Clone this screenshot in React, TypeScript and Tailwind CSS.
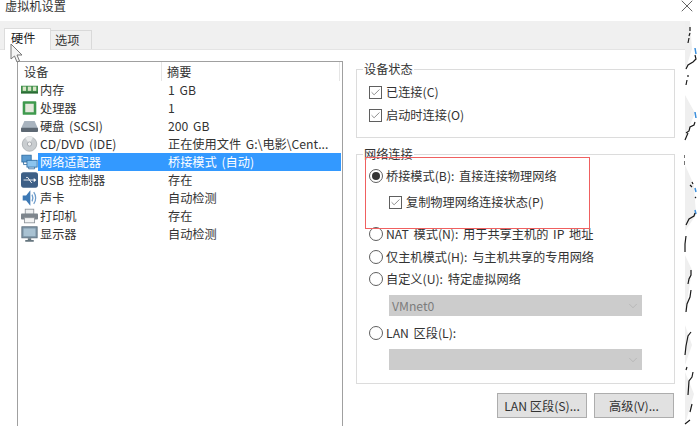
import type { ReactNode } from "react";
import { Check, ChevronDown, X } from "lucide-react";

const RamIcon = () => (
  <svg width="17" height="16" viewBox="0 0 20 18">
    <rect x="0" y="4" width="20" height="9" fill="#3f8f4a" />
    <rect x="0" y="11" width="20" height="2" fill="#2c6a36" />
    <rect x="2" y="5" width="4" height="5" fill="#d9e6c8" />
    <rect x="8" y="5" width="4" height="5" fill="#d9e6c8" />
    <rect x="14" y="5" width="4" height="5" fill="#d9e6c8" />
  </svg>
);

const CpuIcon = () => (
  <svg width="17" height="16" viewBox="0 0 20 18">
    <rect x="2" y="1" width="16" height="16" rx="1" fill="#3f9a4e" />
    <rect x="5" y="4" width="10" height="10" fill="#e4e8dc" />
  </svg>
);

const DiskIcon = () => (
  <svg width="17" height="16" viewBox="0 0 20 18">
    <path d="M4 3h12l4 9H0z" fill="#a9b4bf" />
    <rect x="0" y="11" width="20" height="5" rx="1" fill="#5d6873" />
  </svg>
);

const CdIcon = () => (
  <svg width="17" height="16" viewBox="0 0 20 18">
    <circle cx="10" cy="9" r="8.500" fill="#c9cdd0" stroke="#a8adb1" />
    <path d="M10 9 5 2a8 8 0 0 1 9-1z" fill="#e9ebec" />
    <circle cx="10" cy="9" r="2.500" fill="#f4f4f4" stroke="#9da2a6" />
  </svg>
);

const NetworkIcon = () => (
  <svg width="17" height="16" viewBox="0 0 20 18">
    <rect x="1" y="1" width="11" height="8" fill="#5b9bd0" stroke="#2f6da3" />
    <rect x="7" y="7" width="12" height="8" fill="#8cc4ee" stroke="#2f6da3" />
    <path d="M3 12h4M3 9v3M9 15v2h7v-2" stroke="#2f6da3" fill="none" />
  </svg>
);

const UsbIcon = () => (
  <svg width="17" height="16" viewBox="0 0 20 18">
    <rect x="0" y="0" width="20" height="18" rx="3" fill="#3d5f86" />
    <path d="M3 9h13M10 9 8 6H6M10 9l2 3h1" stroke="#fff" fill="none" />
    <path d="M15 6.500v5l3-2.500z" fill="#fff" />
  </svg>
);

const SpeakerIcon = () => (
  <svg width="17" height="16" viewBox="0 0 20 18">
    <path d="M2 6h4l5-6v18l-5-6H2z" fill="#3d79b5" />
    <path d="M13 5c1 2 1 6 0 8M15 2c3 4 3 10 0 14" stroke="#6d9ccb" strokeWidth="1.500" fill="none" />
  </svg>
);

const PrinterIcon = () => (
  <svg width="17" height="16" viewBox="0 0 20 18">
    <rect x="5" y="1" width="10" height="6" fill="#eef0f1" stroke="#8d9399" />
    <rect x="0" y="6" width="20" height="7" rx="1" fill="#7d858c" />
    <rect x="4" y="11" width="12" height="6" fill="#f3f4f4" stroke="#8d9399" />
  </svg>
);

const MonitorIcon = () => (
  <svg width="17" height="16" viewBox="0 0 20 18">
    <rect x="1" y="0.500" width="18" height="13" fill="#7f97a8" stroke="#5d6f7d" />
    <rect x="3" y="2.500" width="14" height="9" fill="#a9c2d2" />
    <path d="M8 14h4v2H8zM5 16h10v2H5z" fill="#66767f" />
  </svg>
);

const devices: { icon: ReactNode; name: string; summary: string; selected?: boolean }[] = [
  { icon: <RamIcon />, name: "内存", summary: "1 GB" },
  { icon: <CpuIcon />, name: "处理器", summary: "1" },
  { icon: <DiskIcon />, name: "硬盘 (SCSI)", summary: "200 GB" },
  { icon: <CdIcon />, name: "CD/DVD (IDE)", summary: "正在使用文件 G:\\电影\\Cent..." },
  { icon: <NetworkIcon />, name: "网络适配器", summary: "桥接模式 (自动)", selected: true },
  { icon: <UsbIcon />, name: "USB 控制器", summary: "存在" },
  { icon: <SpeakerIcon />, name: "声卡", summary: "自动检测" },
  { icon: <PrinterIcon />, name: "打印机", summary: "存在" },
  { icon: <MonitorIcon />, name: "显示器", summary: "自动检测" },
];

const CheckRow = ({ label, className }: { label: string; className?: string }) => (
  <div className={`flex items-center gap-[4px] h-[18px] ${className ?? ""}`}>
    <span className="flex items-center justify-center w-[13px] h-[13px] border border-[#5f5f5f] bg-white">
      <Check size={11} strokeWidth={1.2} className="text-[#333]" />
    </span>
    <span>{label}</span>
  </div>
);

const RadioRow = ({ label, checked, className }: { label: string; checked?: boolean; className?: string }) => (
  <div className={`flex items-center gap-[3px] h-[18px] ${className ?? ""}`}>
    <span className="flex items-center justify-center w-[14px] h-[14px] rounded-full border border-[#5f5f5f] bg-white">
      {checked && <span className="w-[8px] h-[8px] rounded-full bg-[#333]" />}
    </span>
    <span>{label}</span>
  </div>
);

const DisabledSelect = ({ value, className }: { value?: string; className?: string }) => (
  <div
    className={`flex items-center justify-between ml-[20px] w-[253px] h-[21px] bg-[#cccccc] pl-[3px] pr-[2px] text-[#7c7c7c] ${className ?? ""}`}
  >
    <span>{value}</span>
    <ChevronDown size={14} strokeWidth={1} className="text-[#a8a8a8]" />
  </div>
);

export default function App() {
  return (
    <div
      className="relative flex flex-col w-[700px] h-[426px] overflow-hidden bg-white text-[12.2px] leading-[18px] text-[#333] [word-spacing:2px]"
      style={{ fontFamily: '"Noto Sans CJK SC", "Noto Sans", sans-serif' }}
    >
      {/* title bar */}
      <div className="flex items-center justify-between h-[21px] pl-[5px] pr-[3px] pb-[9px]">
        <span className="leading-[12px]">虚拟机设置</span>
        <X size={20} strokeWidth={1} className="text-[#444]" />
      </div>

      {/* tab strip */}
      <div className="flex items-end h-[29px] w-[690px] bg-[#f0f0f0] border-b border-[#e4e4e4] pl-[4px]">
        <div className="h-[22px] w-[47px] -mb-px bg-white border border-b-0 border-[#dcdcdc] pl-[6px] text-[#222]">
          硬件
        </div>
        <div className="h-[19px] w-[41px] bg-[#f0f0f0] border border-l-0 border-b-0 border-[#d9d9d9] pl-[4px]">
          选项
        </div>
      </div>

      {/* page */}
      <div className="flex flex-1 w-[685px] min-h-0 pl-[17px] pt-[11px]">
        <div className="w-[326px] h-[380px] border border-[#a0a0a0] shrink-0">
          <div className="flex h-[19px]">
            <div className="w-[144px] pl-[6px] pt-px border-r border-[#e5e5e5]">设备</div>
            <div className="flex-1 pl-[5px] pt-px border-r border-[#e5e5e5] mr-[2px]">摘要</div>
          </div>
          <div>
            {devices.map((d) => (
              <div key={d.name} className="flex items-center h-[18px] pl-[3px]">
                <span className="w-[17px] h-[16px] shrink-0">{d.icon}</span>
                <div
                  className={`flex flex-1 h-[18px] items-center mr-px ${
                    d.selected ? "bg-[#3399ff] text-white" : ""
                  }`}
                >
                  <span className="w-[130px] pl-[2px] whitespace-nowrap">{d.name}</span>
                  <span className="whitespace-nowrap">{d.summary}</span>
                </div>
              </div>
            ))}
          </div>
        </div>

        <div className="ml-[13px] w-[319px] shrink-0">
          <fieldset className="border border-[#dcdcdc] h-[77px]">
            <legend className="ml-[6px] px-px leading-[16px]">设备状态</legend>
            <div className="pl-[12px] pt-[6px]">
              <CheckRow label="已连接(C)" />
              <CheckRow label="启动时连接(O)" className="mt-[5px]" />
            </div>
          </fieldset>

          <fieldset className="border border-[#dcdcdc] h-[238px] mt-[8px]">
            <legend className="ml-[6px] px-px leading-[16px]">网络连接</legend>
            <div className="pl-[12px]">
              <RadioRow label="桥接模式(B): 直接连接物理网络" checked className="mt-[5px]" />
              <CheckRow label="复制物理网络连接状态(P)" className="ml-[20px] mt-[8px]" />
              <RadioRow label="NAT 模式(N): 用于共享主机的 IP 地址" className="mt-[14px]" />
              <RadioRow label="仅主机模式(H): 与主机共享的专用网络" className="mt-[5px]" />
              <RadioRow label="自定义(U): 特定虚拟网络" className="mt-[4px]" />
              <DisabledSelect value="VMnet0" className="mt-[7px]" />
              <RadioRow label="LAN 区段(L):" className="mt-[8px]" />
              <DisabledSelect className="mt-[7px]" />
            </div>
          </fieldset>

          <div className="flex justify-end gap-[7px] mt-[9px] pr-px">
            <button className="w-[90px] h-[25px] bg-[#e1e1e1] border border-[#adadad]">LAN 区段(S)...</button>
            <button className="w-[80px] h-[25px] bg-[#e1e1e1] border border-[#adadad]">高级(V)...</button>
          </div>
        </div>
      </div>

      {/* red annotation box */}
      <div className="absolute left-[365px] top-[157px] w-[225px] h-[72px] border border-[#f06060]" />

      {/* mouse cursor */}
      <svg className="absolute left-[10px] top-[43px]" width="14" height="20" viewBox="0 0 14 20">
        <path d="M1 1v15l3.500-3 2.500 6 2.500-1-2.500-6h5z" fill="#f4f4f4" stroke="#777" />
      </svg>

      {/* torn screenshot edge */}
      <svg className="absolute right-0 top-0" width="16" height="426" viewBox="0 0 16 426">
        <path d="M1 21h5l2 28-7 22zM1 95l10 18-10 24zM1 165l9 20 2 30-11 16zM1 255l7 15-7 45zM1 325l7 20-7 20zM1 372l9 22-9 30z" fill="#efefef" />
        <path d="M11 48l1 6M11 112l1 6M11 188l1 4M11 210l1 4" stroke="#3b8fdc" strokeWidth="1.500" fill="none" />
        <path
          d="M6 27v4M6 33l-1 3M5 38l-1 5M11 55l1 4-3 3-5 3-2 4M4 75v2M3 80l-1 5M11 122l-1 3-4 2-1 4-3 2M4 133l-3 7M0 155v3M0 161v4M8 182l1 2M6 185l2 2M11 197l1 1M11 213l-1 3-5 3-3 6M2 236l-1 8v8M7 270v5l-2 4-1 5M7 290l-1 7-3 7-1 8M7 332l-3 4-2 10-1 9M3 367l-1 3M9 372l-1 5-3 4-1 14M8 404l-2 8M6 420l-5 4"
          fill="none"
          stroke="#1a1a1a"
          strokeWidth="1.200"
        />
      </svg>
    </div>
  );
}
